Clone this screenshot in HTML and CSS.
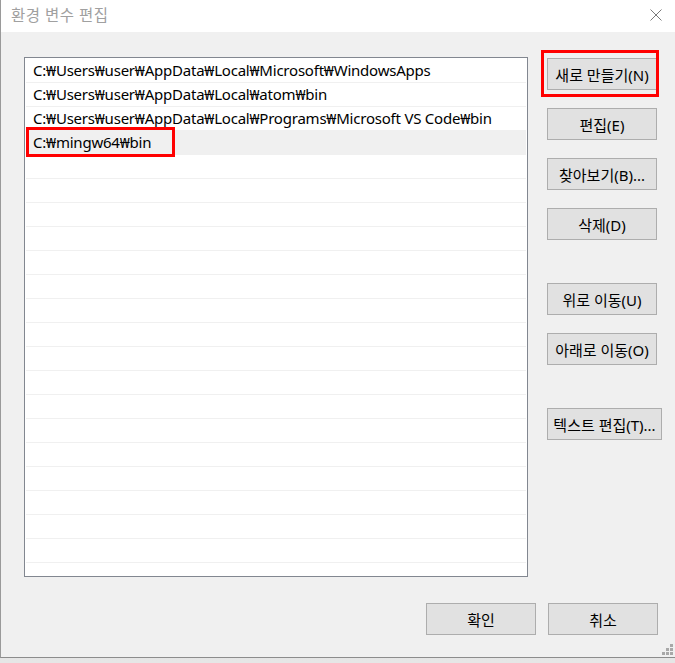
FILE: index.html
```html
<!DOCTYPE html>
<html lang="ko">
<head>
<meta charset="utf-8">
<title>환경 변수 편집</title>
<link rel="stylesheet" href="styles.css">
</head>
<body>
<div class="window">
  <div class="titlebar">
    <span class="title">환경 변수 편집</span>
    <svg class="close" width="12" height="12" viewBox="0 0 12 12"><path d="M0.5 0.5 L11.5 11.5 M11.5 0.5 L0.5 11.5" stroke="#7a7a7a" stroke-width="1" fill="none"/></svg>
  </div>
  <div class="content">
    <div class="main">
      <div class="list">
        <div class="row">C:₩Users₩user₩AppData₩Local₩Microsoft₩WindowsApps</div>
        <div class="row">C:₩Users₩user₩AppData₩Local₩atom₩bin</div>
        <div class="row">C:₩Users₩user₩AppData₩Local₩Programs₩Microsoft VS Code₩bin</div>
        <div class="row selected">C:₩mingw64₩bin</div>
        <div class="row"></div><div class="row"></div><div class="row"></div><div class="row"></div>
        <div class="row"></div><div class="row"></div><div class="row"></div><div class="row"></div>
        <div class="row"></div><div class="row"></div><div class="row"></div><div class="row"></div>
        <div class="row"></div><div class="row"></div><div class="row"></div><div class="row"></div>
        <div class="row"></div><div class="row"></div>
      </div>
      <div class="side">
        <button class="btn">새로 만들기(N)</button>
        <button class="btn">편집(E)</button>
        <button class="btn">찾아보기(B)...</button>
        <button class="btn">삭제(D)</button>
        <button class="btn group">위로 이동(U)</button>
        <button class="btn">아래로 이동(O)</button>
        <button class="btn group wide">텍스트 편집(T)...</button>
      </div>
    </div>
    <div class="footer">
      <button class="btn">확인</button>
      <button class="btn">취소</button>
    </div>
  </div>
  <svg class="grip" width="12" height="12" viewBox="0 0 12 12" fill="#a8a8a8">
    <rect x="8" y="0" width="3" height="3"/>
    <rect x="4" y="4" width="3" height="3"/><rect x="8" y="4" width="3" height="3"/>
    <rect x="0" y="8" width="3" height="3"/><rect x="4" y="8" width="3" height="3"/><rect x="8" y="8" width="3" height="3"/>
  </svg>
  <div class="mark mark-new"></div>
  <div class="mark mark-path"></div>
</div>
</body>
</html>
```
FILE: styles.css
```css
* { box-sizing: border-box; }
html, body { margin: 0; padding: 0; }
body {
  width: 675px;
  height: 663px;
  overflow: hidden;
  background: linear-gradient(#c9c9c9, #e6e6e6);
  font-family: "Noto Sans", "Noto Sans CJK KR", sans-serif;
  font-size: 15px;
  color: #000;
}
.window {
  position: relative;
  width: 675px;
  height: 658px;
  border-left: 1px solid #9a9a9a;
  border-bottom: 1px solid #8c8c8c;
  background: #f0f0f0;
  display: flex;
  flex-direction: column;
}
.titlebar {
  height: 32px;
  background: #fff;
  display: flex;
  align-items: center;
  justify-content: space-between;
  padding: 0 13px 4px 10px;
}
.title {
  font-family: "Noto Sans CJK KR", sans-serif;
  font-size: 15.5px;
  color: #a0a0a0;
  letter-spacing: 0.4px;
}
.close { display: block; margin-top: 2px; }
.content {
  flex: 1;
  padding: 25px 0 0 23px;
  display: flex;
  flex-direction: column;
}
.main { display: flex; }
.list {
  width: 504px;
  height: 520px;
  border: 1px solid #828790;
  background: #fff;
  overflow: hidden;
  padding-top: 1px;
}
.row {
  height: 24px;
  border-bottom: 1px solid #f0f0f0;
  padding-left: 7px;
  line-height: 23px;
  white-space: nowrap;
  margin: 0 1px;
  letter-spacing: -0.22px;
}
.row.selected { background: #f0f0f0; }
.side {
  display: flex;
  flex-direction: column;
  align-items: flex-start;
  gap: 18px;
  margin-left: 19px;
  padding-top: 1px;
}
.btn {
  width: 110px;
  height: 32px;
  border: 1px solid #adadad;
  background: #e1e1e1;
  font-family: "Noto Sans", "Noto Sans CJK KR", sans-serif;
  font-size: 15px;
  color: #000;
  padding: 0;
  white-space: nowrap;
}
.btn.group { margin-top: 25px; }
.btn.wide { width: 115px; }
.footer {
  display: flex;
  justify-content: flex-end;
  gap: 12px;
  padding-right: 17px;
  margin-top: 26px;
}
.grip { position: absolute; right: 1px; bottom: 1px; }
.mark { position: absolute; border: 3px solid #ff0000; }
.mark-new { left: 540px; top: 50px; width: 118px; height: 47px; }
.mark-path { left: 25px; top: 127px; width: 149px; height: 30px; }
```
